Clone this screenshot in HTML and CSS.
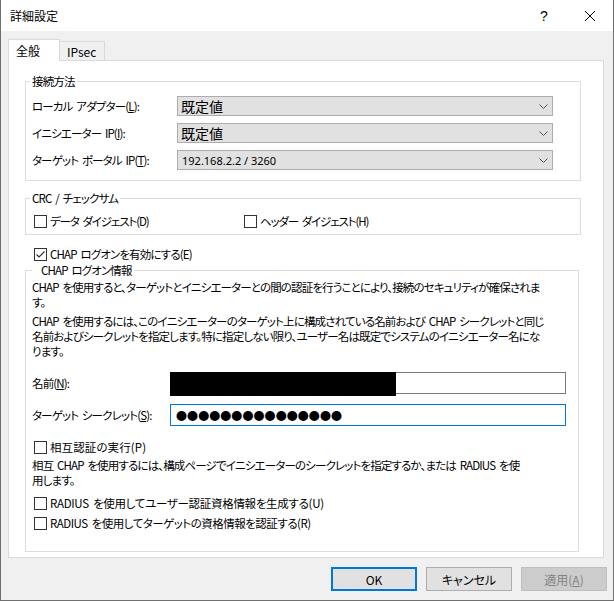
FILE: index.html
```html
<!DOCTYPE html>
<html lang="ja">
<head>
<meta charset="utf-8">
<title>詳細設定</title>
<link rel="stylesheet" href="styles.css">
</head>
<body>
<div class="window">
  <div class="titlebar">
    <span class="title">詳細設定</span>
    <span class="capbtn help">?</span>
    <span class="capbtn close"><svg width="10" height="10" viewBox="0 0 10 10"><path d="M0 0L10 10M10 0L0 10" stroke="#000" stroke-width="1" fill="none"/></svg></span>
  </div>
  <div class="tabs">
    <div class="tab active">全般</div>
    <div class="tab">IPsec</div>
  </div>
  <div class="panel">
    <fieldset class="group g1">
      <legend>接続方法</legend>
      <div class="rows">
        <div class="row"><span class="lbl">ローカル アダプター(<u>L</u>):</span><div class="select big"><span>既定値</span><svg class="chev" width="9" height="5" viewBox="0 0 9 5"><path d="M0.5 0.5L4.5 4.5L8.5 0.5" stroke="#555" fill="none"/></svg></div></div>
        <div class="row"><span class="lbl">イニシエーター IP(<u>I</u>):</span><div class="select big"><span>既定値</span><svg class="chev" width="9" height="5" viewBox="0 0 9 5"><path d="M0.5 0.5L4.5 4.5L8.5 0.5" stroke="#555" fill="none"/></svg></div></div>
        <div class="row"><span class="lbl">ターゲット ポータル IP(<u>T</u>):</span><div class="select small"><span>192.168.2.2 / 3260</span><svg class="chev" width="9" height="5" viewBox="0 0 9 5"><path d="M0.5 0.5L4.5 4.5L8.5 0.5" stroke="#555" fill="none"/></svg></div></div>
      </div>
    </fieldset>
    <fieldset class="group g2">
      <legend>CRC / チェックサム</legend>
      <div class="crc">
        <label class="check first"><span class="box"></span><span>データ ダイジェスト(D)</span></label>
        <label class="check"><span class="box"></span><span>ヘッダー ダイジェスト(H)</span></label>
      </div>
    </fieldset>
    <label class="check chapon"><span class="box checked"><svg width="11" height="11" viewBox="0 0 11 11"><path d="M1.5 5.5L4 8L9.5 2.5" stroke="#333" stroke-width="1.2" fill="none"/></svg></span><span>CHAP ログオンを有効にする(E)</span></label>
    <fieldset class="group g3">
      <legend>CHAP ログオン情報</legend>
      <div class="chap">
        <p class="p1">CHAP を使用すると、ターゲットとイニシエーターとの間の認証を行うことにより、接続のセキュリティが確保されま<br>す。</p>
        <p class="p2">CHAP を使用するには、このイニシエーターのターゲット上に構成されている名前および CHAP シークレットと同じ<br>名前およびシークレットを指定します。特に指定しない限り、ユーザー名は既定でシステムのイニシエーター名にな<br>ります。</p>
        <div class="field name"><span class="flbl">名前(<u>N</u>):</span><div class="input"><span class="redact"></span></div></div>
        <div class="field secret"><span class="flbl">ターゲット シークレット(<u>S</u>):</span><div class="input focus"><span class="dots">●●●●●●●●●●●●●●●</span></div></div>
        <label class="check mutual"><span class="box"></span><span>相互認証の実行(P)</span></label>
        <p class="p3">相互 CHAP を使用するには、構成ページでイニシエーターのシークレットを指定するか、または RADIUS を使<br>用します。</p>
        <label class="check r1"><span class="box"></span><span>RADIUS を使用してユーザー認証資格情報を生成する(U)</span></label>
        <label class="check r2"><span class="box"></span><span>RADIUS を使用してターゲットの資格情報を認証する(R)</span></label>
      </div>
    </fieldset>
  </div>
  <div class="buttons">
    <button class="btn default">OK</button>
    <button class="btn">キャンセル</button>
    <button class="btn disabled">適用(<u>A</u>)</button>
  </div>
</div>
</body>
</html>
```
FILE: styles.css
```css
* { box-sizing: border-box; }
html, body { margin: 0; padding: 0; }
body {
  background: #3c3c3c;
  font-family: "Noto Sans CJK JP", "Noto Sans", sans-serif;
  font-size: 11.5px;
  letter-spacing: -0.85px;
  word-spacing: 2px;
  color: #000;
  font-feature-settings: "palt";
}
u { text-decoration: underline; text-underline-offset: 1px; }
.window {
  width: 614px;
  height: 601px;
  background: #f0f0f0;
  border: 1px solid #707070;
  border-top: none;
  display: flex;
  flex-direction: column;
}
.titlebar {
  height: 31px;
  flex: none;
  background: #fff;
  display: flex;
  align-items: center;
  padding-left: 9px;
  font-size: 12px;
  letter-spacing: 0;
  word-spacing: 0;
}
.title { flex: 1; line-height: 16px; }
.capbtn {
  width: 46px;
  height: 31px;
  display: flex;
  align-items: center;
  justify-content: center;
}
.help { font-family: "Liberation Sans", sans-serif; font-size: 14px; }
.tabs {
  display: flex;
  align-items: flex-end;
  height: 22px;
  margin: 8px 0 -1px 7px;
  position: relative;
  z-index: 1;
  font-size: 12px;
  letter-spacing: 0;
  word-spacing: 0;
}
.tab {
  height: 20px;
  width: 45px;
  padding-left: 7px;
  display: flex;
  align-items: center;
  background: #f0f0f0;
  border: 1px solid #d9d9d9;
  border-left: none;
}
.tab.active {
  height: 22px;
  width: 52px;
  background: #fff;
  border-left: 1px solid #d9d9d9;
  border-bottom: none;
  padding-bottom: 1px;
}
.panel {
  margin-left: 7px;
  width: 596px;
  height: 498px;
  flex: none;
  background: #fff;
  border: 1px solid #d9d9d9;
  padding-left: 16px;
}
.group {
  margin: 0;
  padding: 0;
  border: 1px solid #dcdcdc;
  min-width: 0;
  width: 556px;
}
.group legend {
  padding: 0 2px;
  margin-left: 4px;
  line-height: 16px;
}
.g1 { margin-top: 12px; }
.rows {
  padding: 7px 0 10px 6px;
  display: flex;
  flex-direction: column;
  gap: 7px;
}
.row { display: flex; align-items: center; height: 20px; }
.lbl { width: 145px; flex: none; }
.select {
  width: 376px;
  height: 20px;
  background: #e1e1e1;
  border: 1px solid #adadad;
  display: flex;
  align-items: center;
  padding-left: 3px;
  position: relative;
  letter-spacing: 0;
  word-spacing: 0;
}
.select span { flex: 1; }
.select.big { font-size: 14px; }
.select.small { font-family: "Noto Sans", sans-serif; font-size: 11px; padding-left: 4px; }
.chev { flex: none; margin-right: 4px; }
.g2 { margin-top: 9px; }
.crc { display: flex; padding: 7px 0 5px 8px; letter-spacing: -1.1px; }
.check { display: flex; align-items: center; height: 16px; gap: 3px; }
.check.first { width: 210px; }
.box {
  width: 13px;
  height: 13px;
  flex: none;
  border: 1px solid #333;
  background: #fff;
  display: flex;
  align-items: center;
  justify-content: center;
}
.chapon { margin: 11px 0 0 9px; }
.g3 { width: 554px; }
.g3 legend { margin-left: 6px; padding: 0 2px 0 9px; }
.chap { padding: 2px 0 20px 6px; }
.chap p { margin: 0; line-height: 15px; white-space: nowrap; }
.p2 { margin-top: 4px !important; }
.field { display: flex; align-items: center; height: 22px; }
.field.name { margin-top: 13px; }
.field.secret { margin-top: 10px; }
.flbl { width: 138px; flex: none; }
.input {
  width: 396px;
  height: 22px;
  border: 1px solid #7a7a7a;
  background: #fff;
  position: relative;
  display: flex;
  align-items: center;
  padding-left: 5px;
}
.input.focus { border-color: #0078d7; }
.redact {
  position: absolute;
  left: -1px;
  top: -1px;
  width: 226px;
  height: 24px;
  background: #000;
}
.dots { font-size: 11px; letter-spacing: 0.07px; line-height: 14px; font-feature-settings: normal; }
.check.mutual { margin: 13px 0 0 2px; letter-spacing: 0.1px; }
.p3 { margin-top: 3px !important; }
.check.r1 { margin: 7px 0 0 2px; letter-spacing: -0.3px; }
.check.r2 { margin: 4px 0 0 2px; letter-spacing: -0.5px; }
.buttons {
  display: flex;
  justify-content: flex-end;
  gap: 9px;
  margin-top: 9px;
  padding-right: 6px;
}
.btn {
  width: 86px;
  height: 24px;
  font-family: inherit;
  font-size: 12px;
  letter-spacing: 0;
  word-spacing: 0;
  font-feature-settings: "palt";
  background: #e1e1e1;
  border: 1px solid #adadad;
  color: #000;
  padding: 0;
}
.btn.default { border: 2px solid #0078d7; }
.btn.disabled { background: #cccccc; border-color: #bfbfbf; color: #838383; }
```
